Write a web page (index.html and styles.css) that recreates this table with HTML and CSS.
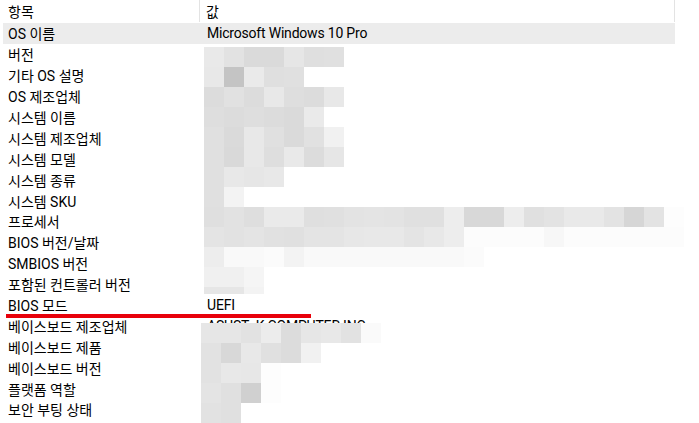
FILE: index.html
```html
<!DOCTYPE html>
<html lang="ko">
<head>
  <meta charset="UTF-8" />
  <meta name="viewport" content="width=device-width, initial-scale=1.0"/>
  <title>시스템 정보</title>
  <link rel="stylesheet" href="styles.css">
</head>
<body>

  <div class="sheet">
    <div class="head">
      <div class="col-name">항목</div>
      <div class="col-value">값</div>
    </div>
    <div class="row selected"><div class="col-name">OS 이름</div><div class="col-value">Microsoft Windows 10 Pro</div></div>
    <div class="row"><div class="col-name">버전</div><div class="col-value"></div></div>
    <div class="row"><div class="col-name">기타 OS 설명</div><div class="col-value"></div></div>
    <div class="row"><div class="col-name">OS 제조업체</div><div class="col-value"></div></div>
    <div class="row"><div class="col-name">시스템 이름</div><div class="col-value"></div></div>
    <div class="row"><div class="col-name">시스템 제조업체</div><div class="col-value"></div></div>
    <div class="row"><div class="col-name">시스템 모델</div><div class="col-value"></div></div>
    <div class="row"><div class="col-name">시스템 종류</div><div class="col-value"></div></div>
    <div class="row"><div class="col-name">시스템 SKU</div><div class="col-value"></div></div>
    <div class="row"><div class="col-name">프로세서</div><div class="col-value"></div></div>
    <div class="row"><div class="col-name">BIOS 버전/날짜</div><div class="col-value"></div></div>
    <div class="row"><div class="col-name">SMBIOS 버전</div><div class="col-value"></div></div>
    <div class="row"><div class="col-name">포함된 컨트롤러 버전</div><div class="col-value"></div></div>
    <div class="row"><div class="col-name">BIOS 모드</div><div class="col-value">UEFI</div></div>
    <div class="row"><div class="col-name">베이스보드 제조업체</div><div class="col-value">ASUSTeK COMPUTER INC.</div></div>
    <div class="row"><div class="col-name">베이스보드 제품</div><div class="col-value"></div></div>
    <div class="row"><div class="col-name">베이스보드 버전</div><div class="col-value"></div></div>
    <div class="row"><div class="col-name">플랫폼 역할</div><div class="col-value"></div></div>
    <div class="row"><div class="col-name">보안 부팅 상태</div><div class="col-value"></div></div>
  </div>

  <!-- pixelated cover over private values -->
  <div class="mosaic mosaic-top" id="mosaicTop"></div>
  <div class="mosaic mosaic-bottom" id="mosaicBottom"></div>

  <!-- red underline mark -->
  <div class="mark"></div>

  <script src="script.js"></script>
</body>
</html>
```

FILE: styles.css
```css
body {
  margin: 0;
  background: #fff;
  color: #000;
  font-family: Roboto, "Noto Sans CJK KR", sans-serif;
  font-size: 14px;
  height: 423px;
  overflow: hidden;
  position: relative;
}

.sheet {
  margin-left: 3px;
  width: 672px;
}

.head,
.row {
  display: grid;
  grid-template-columns: 197px 475px;
  align-items: center;
}

.head {
  height: 23px;
  align-items: stretch;
}

.head .col-name,
.head .col-value {
  display: flex;
  align-items: center;
  height: 22px;
  border-right: 1px solid #e3e3e3;
}

.row {
  height: 20.9px;
}

.row.selected {
  background: #ececec;
}

.col-name {
  padding-left: 5px;
  white-space: nowrap;
}

.col-value {
  padding-left: 6px;
  white-space: nowrap;
  letter-spacing: -0.2px;
}

.row .col-value {
  padding-left: 7px;
}

.mosaic {
  position: absolute;
  display: grid;
  grid-template-columns: repeat(24, 20px);
  grid-auto-rows: 20px;
  overflow: hidden;
}

.mosaic-top {
  left: 204px;
  top: 47px;
  height: 247px;
}

.mosaic-bottom {
  left: 201px;
  top: 323px;
  height: 100px;
}

.mark {
  position: absolute;
  left: 6px;
  top: 314px;
  width: 305px;
  height: 4px;
  background: #e8000a;
}
```

FILE: script.js
```js
// grey levels (hex) of the pixelated blocks, "" = no block
const topBlocks = [
  "e9 e2 da da e6 df e0",
  "e8 c4 ea df e0",
  "dc e1 dc e8 de dc e8",
  "de dc de dc da ea",
  "e0 da e8 e0 da e1 f1",
  "e0 d9 e8 de e9 dc e6",
  "e0 e8 e6 e8",
  "e0 f3",
  "df e2 de ea ea df e0 e3 e4 e3 e0 e0 ed d8 d8 ed e0 e3 e9 e9 e3 d6 e3 fd",
  "e4 e2 e4 e1 e0 e4 e4 e7 e8 e8 e4 e8 ed fc fc fc fc f7 fc fc fc fc fc fc",
  "ed f9 f9 fb f3 f9 f9 f9 f9 f9 f9 f9 f9 fb",
  "f0 f0 f5",
  "e6 e6 f3"
];

const bottomBlocks = [
  "e6 e6 e2 ec dc e6 e8 e2 fa",
  "e2 d8 e8 e0 dc f1",
  "e2 e8 e7 fd",
  "e4 e0 d0 fd",
  "e2 e0"
];

function fillMosaic(el, rows) {
  rows.forEach((line) => {
    const cells = line.split(" ");
    for (let c = 0; c < 24; c++) {
      const cell = document.createElement("div");
      if (cells[c]) {
        cell.style.background = `#${cells[c]}${cells[c]}${cells[c]}`;
      }
      el.appendChild(cell);
    }
  });
}

fillMosaic(document.getElementById("mosaicTop"), topBlocks);
fillMosaic(document.getElementById("mosaicBottom"), bottomBlocks);
```
